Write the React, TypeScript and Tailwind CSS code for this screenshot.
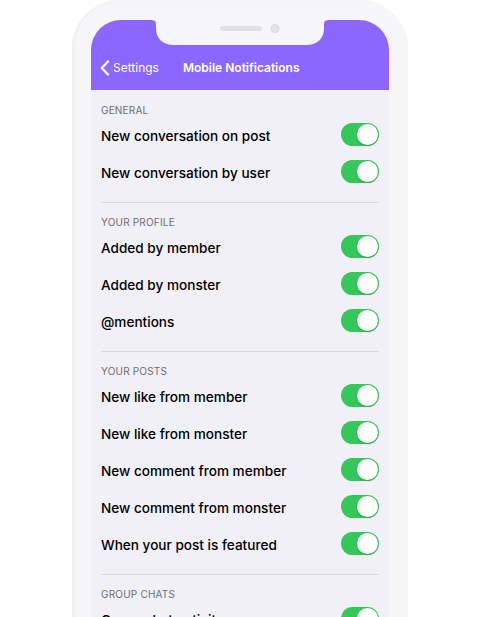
type Section = { title: string; items: string[] };

const sections: Section[] = [
  { title: "GENERAL", items: ["New conversation on post", "New conversation by user"] },
  { title: "YOUR PROFILE", items: ["Added by member", "Added by monster", "@mentions"] },
  {
    title: "YOUR POSTS",
    items: [
      "New like from member",
      "New like from monster",
      "New comment from member",
      "New comment from monster",
      "When your post is featured",
    ],
  },
  { title: "GROUP CHATS", items: ["Group chat activity"] },
];

function Toggle() {
  return (
    <div className="w-[38px] h-[23px] rounded-full bg-[#34c759] flex items-center justify-end pr-[1px]">
      <div className="w-[21px] h-[21px] rounded-full bg-white shadow-[0_1px_2px_rgba(0,0,0,0.2)]" />
    </div>
  );
}

function Notch() {
  return (
    <svg className="absolute left-1/2 -translate-x-1/2 top-0" width="180" height="26" viewBox="0 0 180 26">
      <path
        d="M0 0 H180 C174 0 174 2 174 6 V8 C174 18 168 25 156 25 H24 C12 25 6 18 6 8 V6 C6 2 6 0 0 0 Z"
        fill="#f6f6f8"
      />
      <rect x="70" y="6" width="42" height="5" rx="2.5" fill="#e2e2e6" />
      <circle cx="125" cy="8.5" r="4" fill="#e6e3e6" stroke="#dcd8dc" strokeWidth="1" />
    </svg>
  );
}

export default function App() {
  return (
    <div className="w-[480px] h-[617px] bg-white overflow-hidden" style={{ fontFamily: "Inter, 'Noto Sans', sans-serif" }}>
      <div className="ml-[72px] w-[336px] h-[680px] rounded-t-[48px] bg-[#f6f6f8] pt-[20px] px-[19px] shadow-[inset_2px_0_3px_rgba(0,0,0,0.03)]">
        <div className="rounded-t-[30px] bg-[#f1f0f6] overflow-hidden h-full">
          <div className="relative h-[70px] bg-[#8c67ff] text-white flex items-center pt-[26px] pl-[9px]">
            <Notch />
            <svg width="10" height="16" viewBox="0 0 10 16" className="mr-[3px]">
              <polyline points="8,1.5 1.8,8 8,14.5" fill="none" stroke="white" strokeWidth="2.3" strokeLinecap="round" strokeLinejoin="round" />
            </svg>
            <span className="text-[12px]">Settings</span>
            <span className="text-[12px] font-semibold ml-[24px]">Mobile Notifications</span>
          </div>
          <div className="px-[10px]">
            {sections.map((s, i) => (
              <div
                key={s.title}
                className={`${i === 0 ? "pt-[14px]" : "pt-[13px]"} pb-[12px] border-b border-[#d9d8de]`}
              >
                <div className="text-[10px] leading-[12px] text-[#6e6e73] tracking-[0.2px]">{s.title}</div>
                {s.items.map((item) => (
                  <div key={item} className="h-[37px] flex items-center justify-between">
                    <span className="text-[13.6px] font-medium text-black mt-[3px]">{item}</span>
                    <Toggle />
                  </div>
                ))}
              </div>
            ))}
          </div>
        </div>
      </div>
    </div>
  );
}
